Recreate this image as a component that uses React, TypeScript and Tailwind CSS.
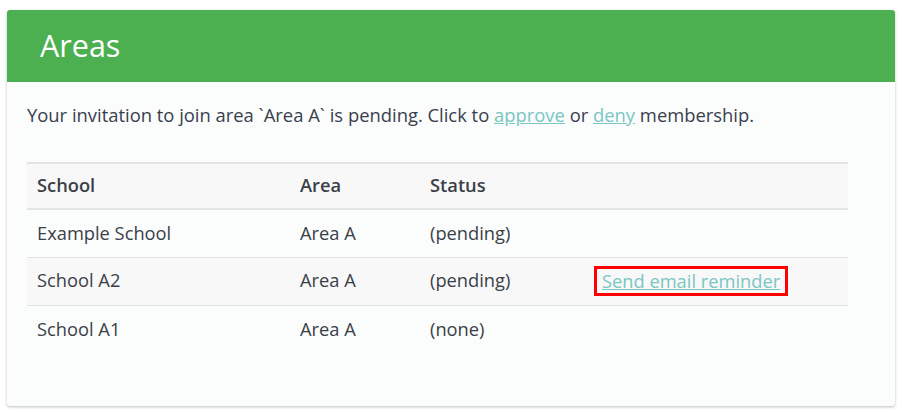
export default function App() {
  const rows = [
    { school: "Example School", area: "Area A", status: "(pending)", remind: false },
    { school: "School A2", area: "Area A", status: "(pending)", remind: true },
    { school: "School A1", area: "Area A", status: "(none)", remind: false },
  ];

  return (
    <div className="w-[902px] h-[412px] bg-white px-[7px] pt-[10px] font-['Open_Sans',sans-serif]">
      <div className="h-[396px] rounded-[3px] bg-[#fbfcfc] shadow-[0_1px_3px_rgba(0,0,0,0.25)] overflow-hidden">
        <div className="h-[72px] bg-[#4caf50] px-[33px] flex items-center">
          <h1 className="text-[30.5px] text-white">Areas</h1>
        </div>
        <div className="px-[20px] pt-[20px]">
          <p className="text-[18.4px] text-[#38404d] leading-[26px]">
            Your invitation to join area `Area A` is pending. Click to{" "}
            <a href="#" className="text-[#79c6c3] underline">approve</a> or{" "}
            <a href="#" className="text-[#79c6c3] underline">deny</a> membership.
          </p>
          <table className="mt-[34px] w-[821px] text-[18.3px] text-[#3a3f48] border-collapse">
            <thead>
              <tr className="bg-[#f8f8f8] border-t-2 border-b-2 border-[#e4e4e4] h-[46px]">
                <th className="text-left font-semibold pl-[10px] w-[273px] pb-[3px]">School</th>
                <th className="text-left font-semibold w-[130px] pb-[3px]">Area</th>
                <th className="text-left font-semibold w-[164px] pb-[3px]">Status</th>
                <th></th>
              </tr>
            </thead>
            <tbody>
              {rows.map((r, i) => (
                <tr
                  key={r.school}
                  className={`h-[48px] ${i < rows.length - 1 ? "border-b border-[#e4e4e4]" : ""} ${i === 1 ? "bg-[#f8f8f8]" : ""}`}
                >
                  <td className="pl-[10px] pb-[2px]">{r.school}</td>
                  <td className="pb-[2px]">{r.area}</td>
                  <td className="pb-[2px]">{r.status}</td>
                  <td>
                    {r.remind && (
                      <a href="#" className="inline-block px-[5px] border-[3px] border-[#f00] text-[#79c6c3] underline leading-[24px]">
                        Send email reminder
                      </a>
                    )}
                  </td>
                </tr>
              ))}
            </tbody>
          </table>
        </div>
      </div>
    </div>
  );
}
